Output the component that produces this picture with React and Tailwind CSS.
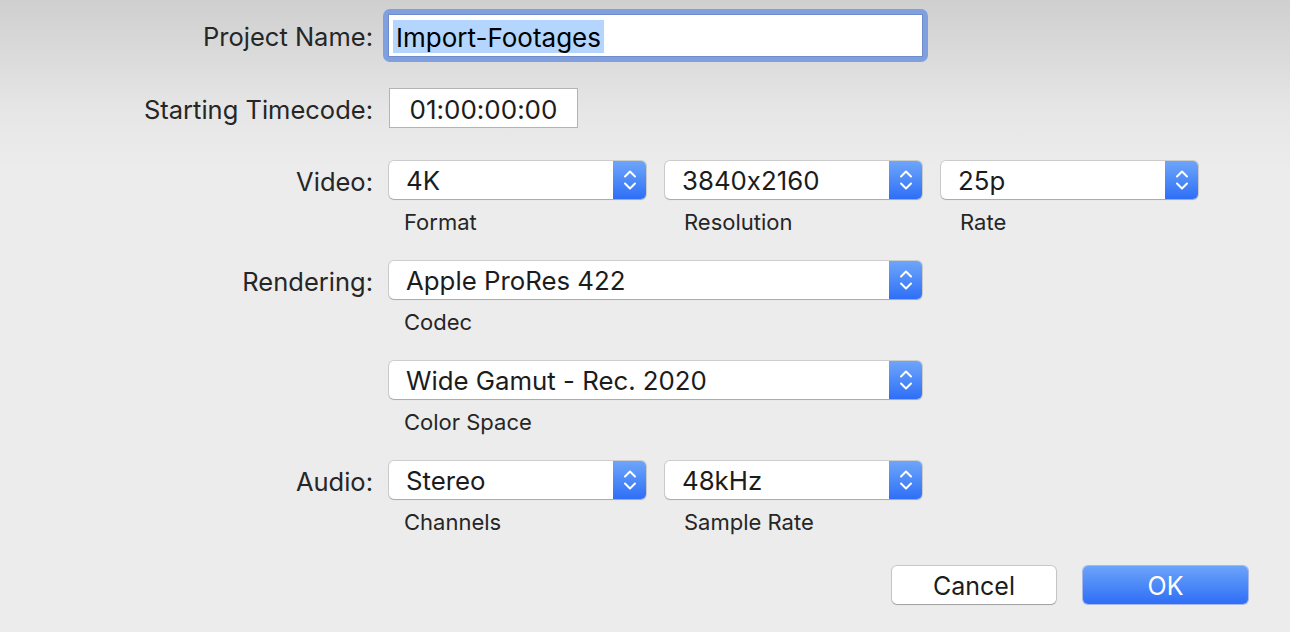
import React from 'react';

const font = { fontFamily: 'Inter, "Liberation Sans", sans-serif' };

const Stepper = () => (
  <div className="flex h-full w-[33px] shrink-0 items-center justify-center rounded-r-[5px] bg-gradient-to-b from-[#6ea5fa] to-[#2f6ef6]">
    <svg width="14" height="24" viewBox="0 0 14 24" fill="none" stroke="white" strokeWidth="2" strokeLinecap="round" strokeLinejoin="round">
      <path d="M2 8.5 L7 3.5 L12 8.5" />
      <path d="M2 15.5 L7 20.5 L12 15.5" />
    </svg>
  </div>
);

const Select = ({ value, width }) => (
  <div
    className={`flex h-[38px] items-center rounded-[5px] bg-white shadow-[0_0_0_1px_rgba(0,0,0,0.13),0_1px_1px_rgba(0,0,0,0.18)] ${width}`}
  >
    <span className="flex-1 pl-[17px] pt-[2px] text-[25.8px] leading-none text-[#1c1c1c]">{value}</span>
    <Stepper />
  </div>
);

const SubLabel = ({ children, className = '' }) => (
  <div className={`mt-[10px] h-[26px] text-[22px] leading-[26px] text-[#262626] ${className}`}>{children}</div>
);

const Label = ({ children }) => (
  <div className="w-[373px] shrink-0 pt-[3px] text-right text-[25.5px] leading-none text-[#262626]">{children}</div>
);

const App = () => {
  return (
    <div
      className="h-[632px] w-[1290px] overflow-hidden bg-[linear-gradient(to_bottom,#cfcfcf_0px,#e6e6e6_110px,#ececec_170px,#ececec_100%)] pt-[9px] [font-feature-settings:'calt'_0]"
      style={font}
    >
      {/* Project name */}
      <div className="flex h-[53px] items-center">
        <Label>Project Name:</Label>
        <div className="ml-[10px] h-[53px] w-[545px] shrink-0 rounded-[7px] bg-[#7f9fdf] p-[5px]">
          <div className="flex h-full items-center border border-[#6f8ccc] bg-white pl-[4px] pt-[2px]">
            <span className="bg-[#b4d5fe] px-[3px] pt-[3px] pb-[1px] text-[26px] leading-[29px] text-black">Import-Footages</span>
          </div>
        </div>
      </div>

      {/* Timecode */}
      <div className="mt-[26px] flex h-[40px] items-center">
        <Label>Starting Timecode:</Label>
        <div className="ml-[16px] flex h-[40px] w-[189px] items-center justify-center border border-[#b3b3b3] bg-white pt-[3px] text-[26px] leading-none text-[#1c1c1c]">
          01:00:00:00
        </div>
      </div>

      {/* Video */}
      <div className="mt-[33px] flex">
        <div className="flex h-[38px] items-center">
          <Label>Video:</Label>
        </div>
        <div className="ml-[16px] flex gap-[19px]">
          <div>
            <Select value="4K" width="w-[257px]" />
            <SubLabel className="pl-[15px]">Format</SubLabel>
          </div>
          <div>
            <Select value="3840x2160" width="w-[257px]" />
            <SubLabel className="pl-[19px]">Resolution</SubLabel>
          </div>
          <div>
            <Select value="25p" width="w-[257px]" />
            <SubLabel className="pl-[19px]">Rate</SubLabel>
          </div>
        </div>
      </div>

      {/* Rendering */}
      <div className="mt-[26px] flex">
        <div className="flex h-[38px] items-center">
          <Label>Rendering:</Label>
        </div>
        <div className="ml-[16px]">
          <Select value="Apple ProRes 422" width="w-[533px]" />
          <SubLabel className="pl-[15px]">Codec</SubLabel>
          <div className="mt-[26px]">
            <Select value="Wide Gamut - Rec. 2020" width="w-[533px]" />
            <SubLabel className="pl-[15px]">Color Space</SubLabel>
          </div>
        </div>
      </div>

      {/* Audio */}
      <div className="mt-[26px] flex">
        <div className="flex h-[38px] items-center">
          <Label>Audio:</Label>
        </div>
        <div className="ml-[16px] flex gap-[19px]">
          <div>
            <Select value="Stereo" width="w-[257px]" />
            <SubLabel className="pl-[15px]">Channels</SubLabel>
          </div>
          <div>
            <Select value="48kHz" width="w-[257px]" />
            <SubLabel className="pl-[19px]">Sample Rate</SubLabel>
          </div>
        </div>
      </div>

      {/* Buttons */}
      <div className="mt-[31px] flex justify-end gap-[27px] pr-[42px]">
        <button className="h-[38px] w-[164px] rounded-[5px] bg-white pt-[2px] text-[25px] leading-none text-[#1c1c1c] shadow-[0_0_0_1px_rgba(0,0,0,0.15),0_1px_1px_rgba(0,0,0,0.2)]">
          Cancel
        </button>
        <button className="h-[38px] w-[165px] rounded-[5px] bg-gradient-to-b from-[#6ca3f9] to-[#2e6df6] pt-[2px] text-[25px] leading-none text-white shadow-[0_0_0_1px_rgba(40,90,220,0.35)]">
          OK
        </button>
      </div>
    </div>
  );
};

export default App;
